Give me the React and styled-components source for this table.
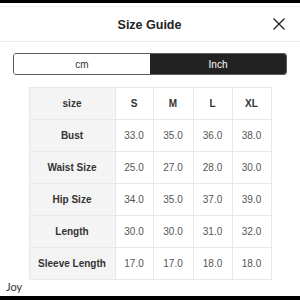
import React, { useState } from "react";
import styled, { createGlobalStyle } from "styled-components";

const Global = createGlobalStyle`
  html, body { margin: 0; padding: 0; background: #fff; }
  body { font-family: "Liberation Sans", Arial, sans-serif; }
`;

const Page = styled.div`
  width: 300px;
  height: 300px;
  display: flex;
  flex-direction: column;
  overflow: hidden;
  background: #fff;
`;

const EdgeBar = styled.div`
  height: ${(p) => p.$h}px;
  background: #000;
  flex: none;
`;

const Header = styled.div`
  flex: none;
  margin-top: 3px;
  height: 34px;
  border-top: 1px solid #ececec;
  border-bottom: 1px solid #ececec;
  display: grid;
  grid-template-columns: 1fr auto 1fr;
  align-items: center;
  padding: 0 15px 0 14px;
`;

const Title = styled.h1`
  grid-column: 2;
  margin: 0;
  font-size: 12.5px;
  font-weight: bold;
  color: #222;
  padding-top: 1px;
`;

const Close = styled.button`
  grid-column: 3;
  justify-self: end;
  width: 13px;
  height: 13px;
  padding: 0;
  border: none;
  background: none;
  display: flex;
  align-items: center;
  justify-content: center;
`;

const Toggle = styled.div`
  flex: none;
  margin: 11px 13px 0;
  height: 22px;
  display: grid;
  grid-template-columns: 1fr 1fr;
  border: 1px solid #5a5a5a;
  border-radius: 3px;
  overflow: hidden;
  box-sizing: border-box;
`;

const ToggleOption = styled.button`
  border: none;
  margin: 0;
  padding: 0;
  font-family: "Liberation Sans", Arial, sans-serif;
  font-size: 10px;
  background: ${(p) => (p.$active ? "#222" : "#fff")};
  color: ${(p) => (p.$active ? "#fff" : "#333")};
`;

const TableWrap = styled.div`
  flex: none;
  margin-top: 12px;
  display: flex;
  justify-content: center;
`;

const Table = styled.table`
  border-collapse: collapse;
  font-size: 10px;
  table-layout: fixed;
`;

const Row = styled.tr`
  height: 32px;
`;

const Cell = styled.td`
  border: 1px solid #e8e8e8;
  padding: 0;
  text-align: center;
  width: ${(p) => p.$w}px;
  background: ${(p) => (p.$label ? "#f4f4f4" : "#fff")};
  color: ${(p) => (p.$bold ? "#333" : "#555")};
  font-weight: ${(p) => (p.$bold ? "bold" : "normal")};
`;

const Footer = styled.div`
  flex: 1;
  min-height: 0;
  display: flex;
  align-items: flex-end;
  padding: 0 0 3px 6px;
  font-family: Lato, "Open Sans", sans-serif;
  font-size: 11px;
  line-height: 13px;
  color: #333;
`;

const widths = [85, 37, 39, 38, 38];
const sizes = ["S", "M", "L", "XL"];
const rows = [
  ["Bust", "33.0", "35.0", "36.0", "38.0"],
  ["Waist Size", "25.0", "27.0", "28.0", "30.0"],
  ["Hip Size", "34.0", "35.0", "37.0", "39.0"],
  ["Length", "30.0", "30.0", "31.0", "32.0"],
  ["Sleeve Length", "17.0", "17.0", "18.0", "18.0"],
];

export default function App() {
  const [unit, setUnit] = useState("inch");
  return (
    <Page>
      <Global />
      <EdgeBar $h={3} />
      <Header>
        <Title>Size Guide</Title>
        <Close aria-label="Close">
          <svg width="12" height="12" viewBox="0 0 12 12">
            <path d="M0.5 0.5 L11.5 11.5 M11.5 0.5 L0.5 11.5" stroke="#222" strokeWidth="1.3" fill="none" />
          </svg>
        </Close>
      </Header>
      <Toggle>
        <ToggleOption $active={unit === "cm"} onClick={() => setUnit("cm")}>cm</ToggleOption>
        <ToggleOption $active={unit === "inch"} onClick={() => setUnit("inch")}>Inch</ToggleOption>
      </Toggle>
      <TableWrap>
        <Table>
          <tbody>
            <Row>
              <Cell $w={widths[0]} $label $bold>size</Cell>
              {sizes.map((s, i) => (
                <Cell key={s} $w={widths[i + 1]} $bold>{s}</Cell>
              ))}
            </Row>
            {rows.map((r) => (
              <Row key={r[0]}>
                <Cell $w={widths[0]} $label $bold>{r[0]}</Cell>
                {r.slice(1).map((v, i) => (
                  <Cell key={i} $w={widths[i + 1]}>{v}</Cell>
                ))}
              </Row>
            ))}
          </tbody>
        </Table>
      </TableWrap>
      <Footer>Joy</Footer>
      <EdgeBar $h={4} />
    </Page>
  );
}
